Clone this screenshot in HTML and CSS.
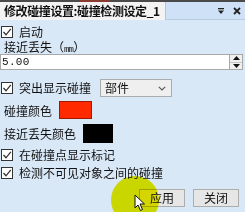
FILE: index.html
```html
<!DOCTYPE html>
<html lang="zh">
<head>
<meta charset="utf-8">
<link rel="stylesheet" href="styles.css">
</head>
<body>
<div class="panel">
  <div class="titlebar">
    <div class="topline"><span class="topline-red"></span></div>
    <div class="titlerow">
      <div class="tab">修改碰撞设置:碰撞检测设定_1</div>
      <div class="tools">
        <svg class="tool-icon" width="8" height="8" viewBox="0 0 8 8"><rect x="1" y="1" width="6" height="1.3" fill="#222"/><path d="M1 3.5 L7 3.5 L4 7 Z" fill="#222"/></svg>
        <svg class="tool-icon" width="8" height="8" viewBox="0 0 8 8"><path d="M1 1 L7 7 M7 1 L1 7" stroke="#222" stroke-width="1.8"/></svg>
      </div>
    </div>
  </div>
  <div class="content">
    <div class="check-row first">
      <span class="cb"><svg width="10" height="10" viewBox="0 0 10 10"><path d="M1.5 5 L4 7.8 L8.8 1.8" fill="none" stroke="#333" stroke-width="1.3"/></svg></span>
      <span class="txt">启动</span>
    </div>
    <div class="label">接近丢失（<span class="unit">mm</span>）</div>
    <div class="spin">
      <div class="spin-input">5.00</div>
      <div class="spin-btns">
        <span class="spin-btn"><svg width="7" height="4" viewBox="0 0 7 4"><path d="M0 4 L3.5 0 L7 4 Z" fill="#111"/></svg></span>
        <span class="spin-btn"><svg width="7" height="4" viewBox="0 0 7 4"><path d="M0 0 L7 0 L3.5 4 Z" fill="#111"/></svg></span>
      </div>
    </div>
    <div class="check-row highlight">
      <span class="cb"><svg width="10" height="10" viewBox="0 0 10 10"><path d="M1.5 5 L4 7.8 L8.8 1.8" fill="none" stroke="#333" stroke-width="1.3"/></svg></span>
      <span class="txt">突出显示碰撞</span>
      <div class="select">
        <span>部件</span>
        <svg width="8" height="5" viewBox="0 0 8 5"><path d="M0.8 0.8 L4 4 L7.2 0.8" fill="none" stroke="#555" stroke-width="1.1"/></svg>
      </div>
    </div>
    <div class="color-row red-row">
      <span class="txt">碰撞颜色</span>
      <span class="swatch red"></span>
    </div>
    <div class="color-row black-row">
      <span class="txt">接近丢失颜色</span>
      <span class="swatch black"></span>
    </div>
    <div class="check-row mark">
      <span class="cb"><svg width="10" height="10" viewBox="0 0 10 10"><path d="M1.5 5 L4 7.8 L8.8 1.8" fill="none" stroke="#333" stroke-width="1.3"/></svg></span>
      <span class="txt">在碰撞点显示标记</span>
    </div>
    <div class="check-row invisible">
      <span class="cb"><svg width="10" height="10" viewBox="0 0 10 10"><path d="M1.5 5 L4 7.8 L8.8 1.8" fill="none" stroke="#333" stroke-width="1.3"/></svg></span>
      <span class="txt">检测不可见对象之间的碰撞</span>
    </div>
    <div class="buttons">
      <button class="btn">应用</button>
      <button class="btn">关闭</button>
    </div>
  </div>
  <div class="highlight-circle"></div>
  <svg class="cursor" width="12" height="18" viewBox="0 0 12 18"><path d="M1 1 L1 14 L4 11 L6.5 16.5 L8.5 15.5 L6 10 L10.5 10 Z" fill="#fff" stroke="#111" stroke-width="1"/></svg>
</div>
</body>
</html>
```

FILE: styles.css
```css
html, body {
  margin: 0;
  padding: 0;
}
body {
  width: 245px;
  height: 212px;
  overflow: hidden;
  background: #d9e8f7;
  font-family: "Noto Sans CJK SC", "Noto Sans", sans-serif;
  font-size: 12px;
  color: #111;
}
.panel {
  position: relative;
  width: 245px;
  height: 212px;
  overflow: hidden;
  background: #d9e8f7;
}
.titlebar {
  display: flex;
  flex-direction: column;
  height: 20px;
}
.topline {
  height: 2px;
  background: #4a4a4a;
  display: flex;
}
.topline-red {
  margin-left: 80px;
  width: 30px;
  background: #8a3a30;
}
.titlerow {
  display: flex;
  flex: 1;
}
.tab {
  width: 161px;
  padding-left: 4px;
  background: #f3f3f3;
  border-right: 1px solid #b8c4d2;
  font-weight: bold;
  font-size: 12px;
  line-height: 18px;
  white-space: nowrap;
  letter-spacing: -0.4px;
  color: #111;
}
.tools {
  flex: 1;
  display: flex;
  justify-content: flex-end;
  align-items: center;
  gap: 8px;
  padding-right: 4px;
  background: #cfe1f7;
  border-bottom: 1px solid #b7cbe3;
}
.tool-icon {
  display: block;
}
.content {
  display: flex;
  flex-direction: column;
}
.check-row {
  display: flex;
  align-items: center;
  gap: 6px;
  padding-left: 1px;
  line-height: 14px;
}
.check-row.first {
  margin-top: 5px;
  height: 13px;
}
.check-row.highlight {
  margin-top: 9px;
  height: 18px;
}
.check-row.mark {
  margin-top: 6px;
  height: 12px;
}
.check-row.invisible {
  margin-top: 6px;
  height: 12px;
}
.cb {
  width: 10px;
  height: 10px;
  border: 1px solid #333;
  background: #fff;
  display: flex;
  align-items: center;
  justify-content: center;
  flex: none;
}
.cb svg {
  display: block;
}
.txt {
  white-space: nowrap;
}
.label {
  margin-top: 2px;
  height: 14px;
  line-height: 14px;
  padding-left: 4px;
  white-space: nowrap;
}
.unit {
  font-family: "Liberation Mono", monospace;
  font-size: 9px;
  letter-spacing: -0.8px;
}
.spin {
  display: flex;
  height: 16px;
  margin-right: 2px;
}
.spin-input {
  flex: 1;
  background: #fff;
  border: 1px solid #a9a9a9;
  font-family: "Liberation Mono", monospace;
  font-size: 11px;
  line-height: 14px;
  padding-left: 1px;
  letter-spacing: 0.3px;
}
.spin-btns {
  width: 12px;
  display: flex;
  flex-direction: column;
  border: 1px solid #a9a9a9;
  border-left: none;
  background: #f0f0f0;
}
.spin-btn {
  flex: 1;
  display: flex;
  align-items: center;
  justify-content: center;
}
.spin-btn + .spin-btn {
  border-top: 1px solid #c8c8c8;
}
.select {
  margin-left: 3px;
  border: 1px solid #adadad;
  background: #efefef;
  display: flex;
  align-items: center;
  justify-content: space-between;
  padding: 0 5px 0 4px;
  box-sizing: border-box;
  width: 72px;
  height: 18px;
}
.select svg {
  display: block;
}
.color-row {
  display: flex;
  align-items: center;
  padding-left: 4px;
}
.red-row {
  margin-top: 4px;
  height: 18px;
  gap: 7px;
}
.black-row {
  margin-top: 5px;
  height: 19px;
  gap: 7px;
}
.swatch {
  display: block;
  flex: none;
}
.swatch.red {
  width: 31px;
  height: 16px;
  background: #ff2a00;
  border: 1px solid #a01800;
}
.swatch.black {
  width: 30px;
  height: 19px;
  background: #000;
}
.buttons {
  margin-top: 10px;
  display: flex;
  justify-content: flex-end;
  gap: 8px;
  padding-right: 6px;
}
.btn {
  width: 46px;
  height: 18px;
  border: 1px solid #adadad;
  background: #e6e6e6;
  font-family: "Noto Sans CJK SC", sans-serif;
  font-size: 12px;
  line-height: 14px;
  padding: 0;
  color: #111;
}
.highlight-circle {
  position: absolute;
  left: 111px;
  top: 176px;
  width: 48px;
  height: 48px;
  border-radius: 50%;
  mix-blend-mode: multiply;
  background: radial-gradient(circle, rgb(236,236,0) 0%, rgb(236,236,0) 82%, rgba(236,236,0,0) 100%);
}
.cursor {
  position: absolute;
  left: 134px;
  top: 194px;
}
```
